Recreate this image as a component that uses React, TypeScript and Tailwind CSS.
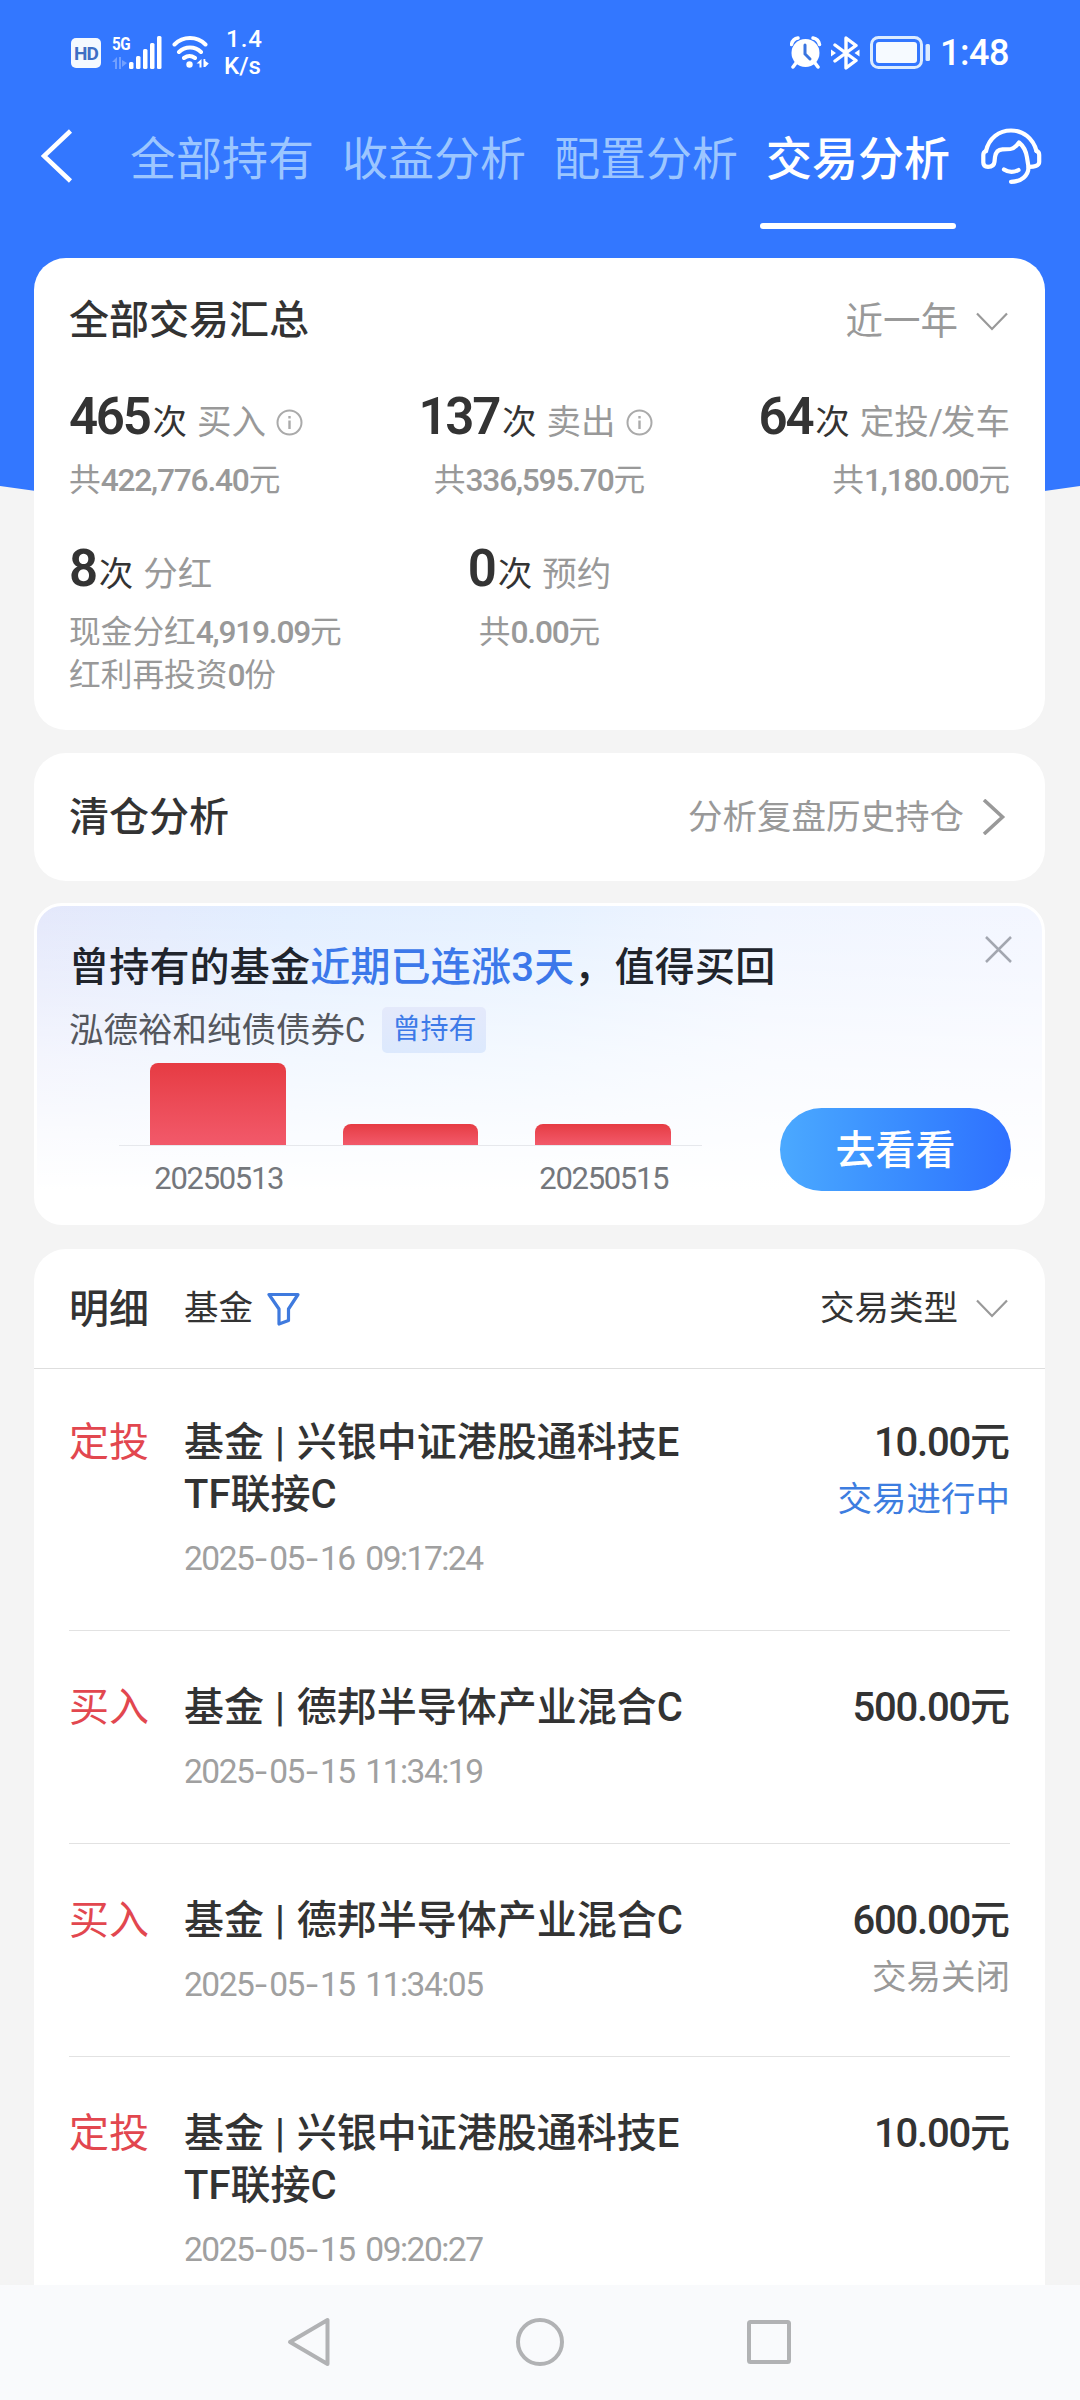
import clsx from 'clsx'

interface MixedTextProps {
    children: string
    tight?: string
}

interface StatProps {
    count: string
    label: string
    lines: string[]
    info?: boolean
    align?: 'left' | 'center' | 'right'
}

interface RecordProps {
    type: string
    name: string[]
    time: string
    amount: string
    state?: string
    pending?: boolean
}

const tabs = ['全部持有', '收益分析', '配置分析', '交易分析']

const stats: StatProps[] = [
    { count: '465', label: '买入', lines: ['共422,776.40元'], info: true, align: 'left' },
    { count: '137', label: '卖出', lines: ['共336,595.70元'], info: true, align: 'center' },
    { count: '64', label: '定投/发车', lines: ['共1,180.00元'], align: 'right' },
    { count: '8', label: '分红', lines: ['现金分红4,919.09元', '红利再投资0份'], align: 'left' },
    { count: '0', label: '预约', lines: ['共0.00元'], align: 'center' },
]

const bars = [
    { height: 82, label: '20250513' },
    { height: 21, label: '' },
    { height: 21, label: '20250515' },
]

const records: RecordProps[] = [
    { type: '定投', name: ['兴银中证港股通科技E', 'TF联接C'], time: '2025-05-16 09:17:24', amount: '10.00元', state: '交易进行中', pending: true },
    { type: '买入', name: ['德邦半导体产业混合C'], time: '2025-05-15 11:34:19', amount: '500.00元' },
    { type: '买入', name: ['德邦半导体产业混合C'], time: '2025-05-15 11:34:05', amount: '600.00元', state: '交易关闭' },
    { type: '定投', name: ['兴银中证港股通科技E', 'TF联接C'], time: '2025-05-15 09:20:27', amount: '10.00元' },
]

// digits are set a little tighter than the characters round them
const MixedText = ({ children, tight = 'tracking-[-0.03em]' }: MixedTextProps) => (
    <>
        {children.split(/([\d.,]+)/).map((part, i) => (
            i % 2 ? <span key={i} className={tight}>{part}</span> : part
        ))}
    </>
)

const StatusBar = () => (
    <div className="flex h-[106px] shrink-0 items-start justify-between pl-[71px] pr-[71px] text-white">
        <div className="flex">
            <div className="mt-[38px] flex h-[30px] w-[30px] items-center justify-center rounded-[5px] bg-[#f4f9ff] text-[19px] font-bold leading-none tracking-[-1px] text-[#3f6fc4]">HD</div>
            <div className="ml-[11px] mt-[34px] w-[18px]">
                <p className="origin-left scale-x-80 text-[19px] font-bold leading-[19px] tracking-[-0.5px]">5G</p>
                <svg className="mt-1 block opacity-30" width="15" height="12" viewBox="0 0 15 12" fill="white">
                    <path d="M5 0v12H3V5H0zM7 0h2v12H7zM10 3l5 3-5 4z" />
                </svg>
            </div>
            <svg className="mt-[36px] -ml-px" width="33" height="33" viewBox="0 0 33 33" fill="white">
                <rect x="0" y="26" width="4.500" height="7" rx="1.500" />
                <rect x="7" y="20" width="4.500" height="13" rx="1.500" />
                <rect x="14" y="13" width="4.500" height="20" rx="1.500" />
                <rect x="21" y="7" width="4.500" height="26" rx="1.500" />
                <rect x="28" y="0" width="4.500" height="33" rx="1.500" />
            </svg>
            <svg className="ml-[10px] mt-[35px]" width="38" height="34" viewBox="0 0 38 34" fill="none" stroke="white" strokeWidth="4" strokeLinecap="round">
                <path d="M2.500 9.500a22 22 0 0 1 31 0M7 17a16 16 0 0 1 22 0M12 23a9.500 9.500 0 0 1 11 0" />
                <circle cx="17.500" cy="29.500" r="3.200" fill="white" stroke="none" />
                <path d="M29.500 24v8.500h-2v-4h-3zM31.500 24h1.800v2l3.500 2.500-3.500 3.500h-1.800z" fill="white" stroke="none" />
            </svg>
            <div className="ml-[15px] mt-[26px] text-[24px] font-medium leading-[27px]">
                <p className="pl-px tracking-[1px]">1.4</p>
                <p className="-ml-px">K/s</p>
            </div>
        </div>
        <div className="flex">
            <svg className="mt-[36px]" width="32" height="33" viewBox="0 0 32 33" fill="none" stroke="white">
                <circle cx="15.500" cy="17" r="14" fill="white" stroke="none" />
                <path d="M1.500 8.500a8 8 0 0 1 6.500-6.500M29.500 8.500a8 8 0 0 0-6.500-6.500" strokeWidth="3.500" strokeLinecap="round" />
                <path d="M6 27l-3 4M25 27l3 4" strokeWidth="3.500" strokeLinecap="round" />
                <path d="M15 9v9l5 5" stroke="#3a75e0" strokeWidth="3" strokeLinecap="round" />
            </svg>
            <svg className="ml-[9px] mt-[36px]" width="29" height="34" viewBox="0 0 29 34" fill="none" stroke="white" strokeWidth="3.400" strokeLinejoin="round" strokeLinecap="round">
                <path d="M4 9l21 15.500-10 7.500V2l10 7.500L4 25" />
                <path d="M0 13.500l5 3.500-5 3.500zM28.500 13.500l-5 3.500 5 3.500z" fill="white" stroke="none" />
            </svg>
            <svg className="ml-[10px] mt-[36px]" width="61" height="33" viewBox="0 0 61 33" fill="none">
                <rect x="1.500" y="1.500" width="50" height="30" rx="7" stroke="#dcecff" strokeWidth="3" />
                <rect x="6" y="6" width="41" height="21" rx="3" fill="#f6faff" />
                <rect x="55.500" y="8" width="4.500" height="17" rx="1.500" fill="#dcecff" />
            </svg>
            <p className="ml-[9px] mt-[32px] w-[69px] whitespace-nowrap text-[36px] font-medium leading-[42px] tracking-[-0.5px]">1:48</p>
        </div>
    </div>
)

const NavTabs = () => (
    <div className="flex h-[152px] shrink-0 items-start pl-[41px] text-white">
        <svg className="mt-[23px]" width="32" height="54" viewBox="0 0 32 54" fill="none" stroke="white" strokeWidth="4.500">
            <path d="M29.500 2L3 27l26.500 25" />
        </svg>
        <div className="ml-[51px] flex">
            {tabs.map((tab) => {
                const active = tab === '交易分析'
                return (
                    <div key={tab} className="flex w-[212px] flex-col items-start">
                        <p className={clsx('mt-[23px] px-[6px] text-[46px] leading-[60px]', active ? 'font-medium' : 'text-[#9cc6ff]')}>{tab}</p>
                        {active && <div className="mt-[34px] h-[6px] w-[196px] rounded-full bg-white" />}
                    </div>
                )
            })}
        </div>
        <svg className="ml-[9px] mt-[22px] shrink-0" width="61" height="58" viewBox="0 0 61 58" fill="none" stroke="white" strokeWidth="4.200" strokeLinecap="round" strokeLinejoin="round">
            <path d="M5 23C8 10 18 2.500 30 2.500s22 7.500 25.500 20.500" />
            <path d="M5 23c-2 .7-2.700 2-2.700 4v7.500c0 3 1.700 4.300 4.700 4.300 4 0 6.200-1.500 6.500-5l.5-4.800c.6-4.500 3-7.500 7.500-7.700l8-.3c4-.3 6-3 8.500-6.500 5 4 7.200 9.500 8 15l1.500 9.300c5 .2 10.700-.8 10.700-4.800v-7c0-2-1-3.500-2.700-4" />
            <path d="M47.500 39c0 8.500-7 14.800-17.500 14.800M23 41.500c4.500 3 10 3 14.500.5" />
        </svg>
    </div>
)

const DownArrow = () => (
    <svg className="mr-[2px]" width="32" height="19" viewBox="0 0 32 19" fill="none" stroke="#999" strokeWidth="2.200">
        <path d="M1 1.500l15 15.500L31 1.500" />
    </svg>
)

const Stat = ({ count, label, lines, info, align }: StatProps) => (
    <div className={clsx('flex flex-col whitespace-nowrap', align === 'left' && 'items-start', align === 'center' && 'items-center', align === 'right' && 'items-end')}>
        <div className="flex h-[60px] items-baseline text-[34.5px] leading-[60px] text-[#999]">
            <span className="text-[51px] font-semibold tracking-[-0.045em] text-[#333]">{count}</span>
            <span className="ml-[3px] text-[#333]">次</span>
            <span className="ml-[10px]">
                {label.split(/(\/)/).map((part, i) => (
                    i % 2 ? <span key={i} className="tracking-[-2px]">/</span> : part
                ))}
            </span>
            {info && (
                <svg className="ml-[10px] mr-[8px] translate-y-[2px]" width="27" height="27" viewBox="0 0 27 27" fill="none" stroke="#aaa" strokeWidth="2">
                    <circle cx="13.500" cy="13.500" r="12" />
                    <path d="M13.500 11.500v8.500M13.500 7v2.500" strokeWidth="2.400" />
                </svg>
            )}
        </div>
        <div className="mt-[12px] text-[31.700px] leading-[43px] text-[#999]">
            {lines.map((line) => (
                <p key={line}><MixedText tight="font-medium tracking-[-0.038em]">{line}</MixedText></p>
            ))}
        </div>
    </div>
)

const Summary = () => (
    <section className="h-[472px] shrink-0 rounded-[32px] bg-white px-[35px]">
        <div className="flex h-[126px] items-center justify-between">
            <h2 className="text-[40px] font-medium leading-[52px] text-[#333]">全部交易汇总</h2>
            <div className="flex items-center gap-[18px] text-[37.500px] leading-[52px] text-[#999]">
                近一年
                <DownArrow />
            </div>
        </div>
        <div className="grid auto-rows-[152px] grid-cols-3 pt-[3px]">
            {stats.map((stat) => <Stat key={stat.label} {...stat} />)}
        </div>
    </section>
)

const ClearedEntry = () => (
    <section className="mt-[23px] flex h-[128px] shrink-0 items-center justify-between rounded-[32px] bg-white px-[35px]">
        <h2 className="pt-[2px] text-[40px] font-medium text-[#333]">清仓分析</h2>
        <div className="flex items-center text-[34.500px] text-[#999]">
            <span className="pt-px">分析复盘历史持仓</span>
            <svg className="ml-[18px] mr-[4px]" width="24" height="36" viewBox="0 0 24 36" fill="none" stroke="#999" strokeWidth="3.600">
                <path d="M2 1l18.500 17L2 35" />
            </svg>
        </div>
    </section>
)

const Promo = () => (
    <section className="relative mt-[22px] h-[322px] shrink-0 rounded-[28px] border-[3px] border-white bg-[linear-gradient(to_bottom,transparent_0%,rgba(255,255,255,0.55)_45%,white_90%),linear-gradient(to_right,#e4e8fb_0%,#e2eeff_25%,#e6f1ff_50%,#f0f5ff_72%,#f3f6ff_100%)] px-[32px]">
        <h2 className="pt-[36px] text-[40px] font-medium leading-[52px] tracking-[0.2px] text-[#20242c]">
            曾持有的基金<span className="text-[#3c78ea]">近期已连涨3天</span>，值得买回
        </h2>
        <div className="mt-[13px] flex items-center">
            <p className="text-[34.500px] leading-[46px] text-[#54575d]">泓德裕和纯债债券<span className="inline-block origin-left scale-x-90">C</span></p>
            <span className="ml-[15px] flex h-[46px] w-[104px] items-center justify-center rounded-[5px] bg-linear-to-b from-[#e4e9fb] to-[#dce9fd] pb-px text-[28px] text-[#3d7ae8]">曾持有</span>
        </div>
        <div className="ml-[50px] mt-[10px] w-[583px]">
            <div className="flex h-[83px] items-end gap-[57px] border-b border-[#e6e8ec] pl-[31px]">
                {bars.map((bar, i) => (
                    <div key={i} className="w-[135.500px] rounded-t-[8px] bg-linear-to-b from-[#e63b43] to-[#f2596a]" style={{ height: bar.height }} />
                ))}
            </div>
            <div className="flex gap-[57px] pl-[31px] pt-[13px] text-[31px] leading-[40px] tracking-[-0.042em] text-[#74777c]">
                {bars.map((bar, i) => <p key={i} className="w-[135.500px] pl-[2px] text-center">{bar.label}</p>)}
            </div>
        </div>
        <button className="absolute bottom-[31px] right-[31px] h-[83px] w-[231px] rounded-full bg-linear-to-r from-[#4ba9ff] to-[#2f70ff] pt-[2px] text-[40px] font-medium text-white">去看看</button>
        <svg className="absolute right-[30px] top-[30px]" width="27" height="27" viewBox="0 0 27 27" stroke="#a3a7b0" strokeWidth="2.500">
            <path d="M1 1l25 25M26 1L1 26" />
        </svg>
    </section>
)

const Record = ({ type, name, time, amount, state, pending }: RecordProps) => (
    <div className="flex border-b border-[#e2e2e2] pb-[51px] pt-[51px] first:pt-[48px]">
        <p className="w-[115px] shrink-0 text-[40px] leading-[52px] text-[#e2474f]">{type}</p>
        <div className="flex-1 whitespace-nowrap">
            <div className="text-[40px] font-medium leading-[52px] text-[#333]">
                <p>基金<span className="tracking-[1px]"> | </span>{name[0]}</p>
                {name[1] && <p>{name[1]}</p>}
            </div>
            <p className="mt-[18px] text-[33.500px] leading-[40px] text-[#a0a0a0]">
                {time.split(/(-)/).map((part, i) => (
                    i % 2
                        ? <span key={i} className="inline-block w-[16px] scale-x-130 text-center">-</span>
                        : <span key={i} className="tracking-[-0.045em] [word-spacing:4px]">{part}</span>
                ))}
            </p>
        </div>
        <div className="text-right">
            <p className="text-[40px] font-medium leading-[52px] text-[#333]"><MixedText>{amount}</MixedText></p>
            {state && <p className={clsx('mt-[8px] text-[34.500px] leading-[44px]', pending ? 'text-[#3d7de0]' : 'text-[#999]')}>{state}</p>}
        </div>
    </div>
)

const Details = () => (
    <section className="mt-[24px] min-h-0 flex-1 overflow-hidden rounded-t-[32px] bg-white">
        <div className="flex h-[120px] items-center border-b border-[#dedede] px-[35px]">
            <h2 className="w-[115px] pt-[2px] text-[40px] font-medium text-[#333]">明细</h2>
            <span className="pt-px text-[34.500px] text-[#333]">基金</span>
            <svg className="ml-[14px]" width="33" height="34" viewBox="0 0 33 34" fill="none" stroke="#3f7ade" strokeWidth="3.200" strokeLinejoin="round">
                <path d="M2 2.500h29L21.500 17v11.500L12 32V17z" />
            </svg>
            <div className="ml-auto flex items-center gap-[18px] text-[34.500px] text-[#333]">
                <span className="pt-px">交易类型</span>
                <DownArrow />
            </div>
        </div>
        <div className="px-[35px]">
            {records.map((record, i) => <Record key={i} {...record} />)}
        </div>
    </section>
)

const SystemNav = () => (
    <div className="flex h-[115px] shrink-0 items-start bg-[#f9fafc] pl-[286px] pt-[31px]">
        <svg width="520" height="52" viewBox="0 0 520 52" fill="none" stroke="#b1b2b4" strokeWidth="4" strokeLinejoin="round">
            <path d="M41.500 4v44L4 26z" />
            <circle cx="254" cy="26" r="22" />
            <rect x="463" y="6" width="40" height="40" rx="1.500" />
        </svg>
    </div>
)

const App = () => {
    return (
        <div className="relative isolate flex h-[2400px] w-[1080px] flex-col overflow-hidden bg-[#f4f4f4] font-['Roboto','Noto_Sans_CJK_SC',sans-serif]">
            <svg className="absolute left-0 top-0 -z-10" width="1080" height="540" viewBox="0 0 1080 540" fill="#3377ff">
                <path d="M0 0h1080v486Q540 565 0 486z" />
            </svg>
            <StatusBar />
            <NavTabs />
            <main className="flex min-h-0 flex-1 flex-col pl-[34px] pr-[35px]">
                <Summary />
                <ClearedEntry />
                <Promo />
                <Details />
            </main>
            <SystemNav />
        </div>
    )
}

export default App
